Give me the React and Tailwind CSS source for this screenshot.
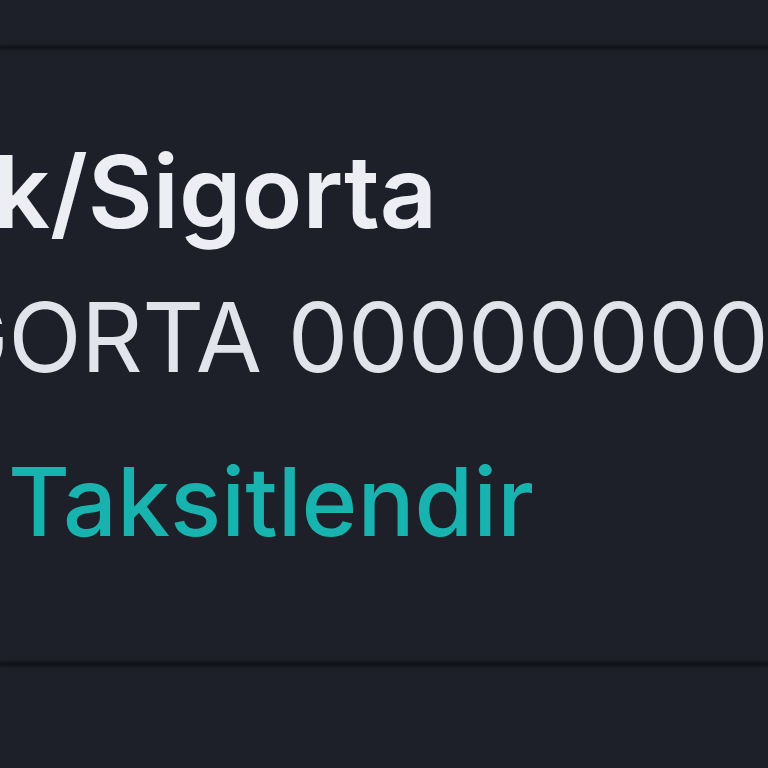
export default function App() {
  return (
    <div className="w-[768px] h-[768px] overflow-hidden bg-[#1e2029] flex flex-col" style={{ fontFamily: 'Inter, "Noto Sans", sans-serif' }}>
      <div className="h-[45px] shrink-0" />
      <div className="h-[5px] shrink-0 bg-[#13151c] blur-[1px]" />
      <div className="h-[611px] shrink-0 flex flex-col whitespace-nowrap overflow-hidden">
        <div className="mt-[92px] leading-none text-[100px] font-semibold text-[#eceef4] -ml-[7px]">k/Sigorta</div>
        <div className="mt-[47px] leading-none text-[96px] font-normal text-[#e2e4ec] -ml-[63px] tracking-[-0.5px]">GORTA 000000000</div>
        <div className="mt-[69px] leading-none text-[95px] font-medium text-[#18b3ae] ml-[8px]">Taksitlendir</div>
      </div>
      <div className="h-[6px] shrink-0 bg-[#13151c] blur-[1px]" />
      <div className="flex-1" />
    </div>
  );
}
